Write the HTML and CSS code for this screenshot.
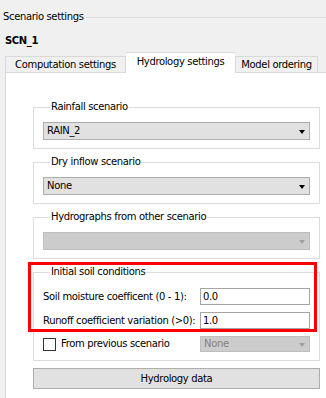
FILE: index.html
```html
<!DOCTYPE html>
<html>
<head>
<meta charset="utf-8">
<link rel="stylesheet" href="styles.css">
</head>
<body>
<div class="window">
  <div class="outer-title-row">
    <span class="outer-title">Scenario settings</span>
    <span class="outer-line"></span>
  </div>
  <div class="scn-name">SCN_1</div>
  <div class="tabs">
    <div class="tab tab-first">Computation settings</div>
    <div class="tab tab-active">Hydrology settings</div>
    <div class="tab tab-last">Model ordering</div>
  </div>
  <div class="pane">
    <fieldset class="group">
      <legend>Rainfall scenario</legend>
      <div class="combo"><span>RAIN_2</span><span class="arrow"></span></div>
    </fieldset>
    <fieldset class="group">
      <legend>Dry inflow scenario</legend>
      <div class="combo"><span>None</span><span class="arrow"></span></div>
    </fieldset>
    <fieldset class="group">
      <legend>Hydrographs from other scenario</legend>
      <div class="combo combo-disabled"><span></span><span class="arrow"></span></div>
    </fieldset>
    <div class="soil-wrap">
      <fieldset class="group soil">
        <legend>Initial soil conditions</legend>
        <div class="soil-grid">
          <div class="label">Soil moisture coefficent (0 - 1):</div>
          <div class="input">0.0</div>
          <div class="label">Runoff coefficient variation (&gt;0):</div>
          <div class="input">1.0</div>
          <div class="check-row"><span class="checkbox"></span><span>From previous scenario</span></div>
          <div class="combo combo-disabled small"><span>None</span><span class="arrow"></span></div>
        </div>
      </fieldset>
      <div class="highlight"></div>
    </div>
    <div class="button">Hydrology data</div>
  </div>
</div>
</body>
</html>
```
FILE: styles.css
```css
html, body {
  margin: 0;
  padding: 0;
  background: #f0f0f0;
}
body {
  font-family: "DejaVu Sans", Verdana, sans-serif;
  font-size: 10px;
  letter-spacing: -0.35px;
  color: #000;
  width: 326px;
  height: 398px;
  overflow: hidden;
}
.window {
  padding-top: 10px;
}
.outer-title-row {
  display: flex;
  align-items: center;
  height: 14px;
  padding-left: 3px;
}
.outer-title {
  line-height: 14px;
  padding-right: 2px;
}
.outer-line {
  flex: 1;
  height: 1px;
  background: #dcdcdc;
}
.scn-name {
  font-weight: bold;
  margin-top: 10px;
  padding-left: 5px;
  line-height: 14px;
}
.tabs {
  display: flex;
  align-items: flex-end;
  margin-top: 4px;
  padding-left: 5px;
  height: 20px;
  position: relative;
  z-index: 1;
}
.tab {
  height: 15px;
  line-height: 15px;
  border: 1px solid #d9d9d9;
  border-bottom: none;
  background: #f0f0f0;
  text-align: center;
  box-sizing: content-box;
}
.tab-first {
  width: 119px;
}
.tab-active {
  width: 109px;
  height: 20px;
  line-height: 18px;
  background: #fff;
  border-left: none;
  border-right: none;
  margin-bottom: -1px;
}
.tab-last {
  width: 81px;
}
.pane {
  margin-left: 5px;
  width: 321px;
  height: 330px;
  background: #fff;
  border: 1px solid #d9d9d9;
  border-right: none;
  padding: 27px 0 0 27px;
  box-sizing: border-box;
}
.group {
  margin: 0 0 6px 0;
  padding: 8px 9px 8px 9px;
  border: 1px solid #dcdcdc;
  width: 287px;
  box-sizing: border-box;
  min-width: 0;
}
.group legend {
  padding: 0 1px;
  margin-left: 7px;
  line-height: 14px;
}
.combo {
  height: 18px;
  box-sizing: border-box;
  border: 1px solid #adadad;
  background: #e1e1e1;
  display: flex;
  align-items: center;
  justify-content: space-between;
  padding: 0 4px 0 3px;
  line-height: 14px;
}
.arrow {
  width: 0;
  height: 0;
  border-left: 3.5px solid transparent;
  border-right: 3.5px solid transparent;
  border-top: 4px solid #000;
  margin-top: 1px;
}
.combo-disabled {
  background: #cccccc;
  border-color: #bfbfbf;
  color: #838383;
}
.combo-disabled .arrow {
  border-top-color: #a0a0a0;
}
.soil-wrap {
  position: relative;
}
.soil {
  padding-top: 9px;
  margin-bottom: 7px;
}
.soil-grid {
  display: grid;
  grid-template-columns: 157px 1fr;
  row-gap: 7px;
  align-items: center;
}
.label {
  line-height: 14px;
  white-space: nowrap;
}
.input {
  height: 17px;
  box-sizing: border-box;
  border: 1px solid #a5a5a5;
  background: #fff;
  padding-left: 2px;
  line-height: 15px;
}
.small {
  height: 16px;
}
.check-row {
  display: flex;
  align-items: center;
  gap: 5px;
  line-height: 14px;
}
.checkbox {
  width: 13px;
  height: 13px;
  box-sizing: border-box;
  border: 1px solid #333;
  background: #fff;
}
.highlight {
  position: absolute;
  left: -5px;
  top: -3px;
  width: 289px;
  height: 70px;
  box-sizing: border-box;
  border: 3px solid #ff0000;
  pointer-events: none;
}
.button {
  width: 287px;
  height: 21px;
  box-sizing: border-box;
  border: 1px solid #adadad;
  background: #e1e1e1;
  text-align: center;
  line-height: 19px;
}
```
